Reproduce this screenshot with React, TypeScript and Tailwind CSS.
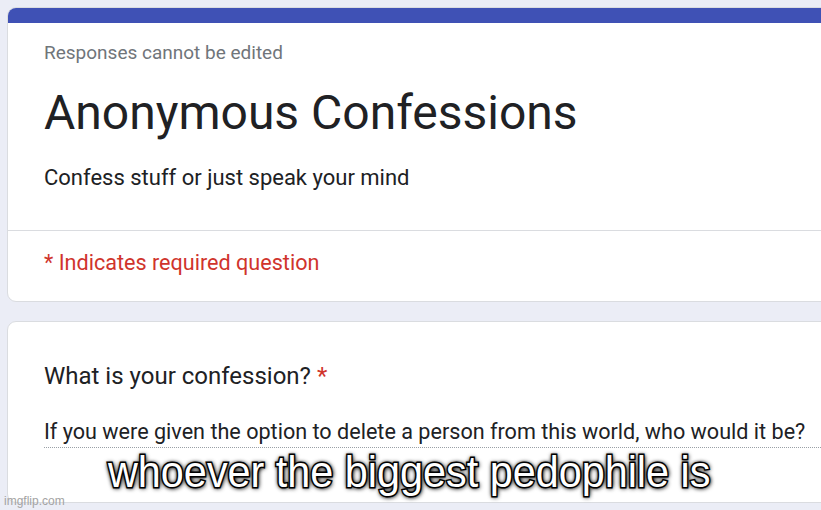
export default function App() {
  return (
    <div
      className="relative h-[510px] w-[821px] overflow-hidden bg-[#ebedf6] pt-[7px] pl-[7px]"
      style={{ fontFamily: "Roboto, 'Liberation Sans', sans-serif" }}
    >
      {/* Header card */}
      <div className="w-[830px] overflow-hidden rounded-[9px] border border-[#dadce0] bg-white">
        <div className="h-[15px] bg-[#3f51b5]" />
        <div className="px-[36px] pt-[18px] pb-[38px]">
          <div className="text-[19px] leading-[24px] text-[#70757a]">Responses cannot be edited</div>
          <h1 className="mt-[23px] text-[48px] leading-[50px] text-[#202124]">Anonymous Confessions</h1>
          <p className="mt-[26px] text-[22px] leading-[28px] text-[#202124]">
            Confess stuff or just speak your mind
          </p>
        </div>
        <div className="border-t border-[#dadce0] px-[36px] pt-[18px] pb-[24px]">
          <div className="text-[21.6px] leading-[28px] text-[#d0342c]">* Indicates required question</div>
        </div>
      </div>

      {/* Question card */}
      <div className="mt-[19px] h-[182px] w-[830px] rounded-[9px] border border-[#dadce0] bg-white px-[36px] pt-[40px]">
        <div className="text-[24px] leading-[28px] text-[#202124]">
          What is your confession? <span className="text-[#d0342c]">*</span>
        </div>
        <div className="mt-[28px] w-[777px] border-b border-dotted border-[#9aa0a6] pb-[1px]">
          <span className="whitespace-nowrap text-[21.6px] leading-[28px] text-[#202124]">
            If you were given the option to delete a person from this world, who would it be?
          </span>
        </div>
      </div>

      {/* Meme caption */}
      <div
        className="absolute left-[108px] top-[448px] origin-left scale-x-[0.94] whitespace-nowrap text-[44px] leading-[48px] text-white"
        style={{
          fontFamily: "'Liberation Sans', Arial, sans-serif",
          WebkitTextStroke: "3px #000",
          paintOrder: "stroke fill",
          textShadow: "0 0 3px #000, 0 0 5px #000, 1px 1px 6px #000",
        }}
      >
        whoever the biggest pedophile is
      </div>

      <div
        className="absolute left-[4px] top-[494px] text-[12px] leading-[14px] text-[#a3a3a3]"
        style={{ fontFamily: "'Liberation Sans', Arial, sans-serif" }}
      >
        imgflip.com
      </div>
    </div>
  );
}
